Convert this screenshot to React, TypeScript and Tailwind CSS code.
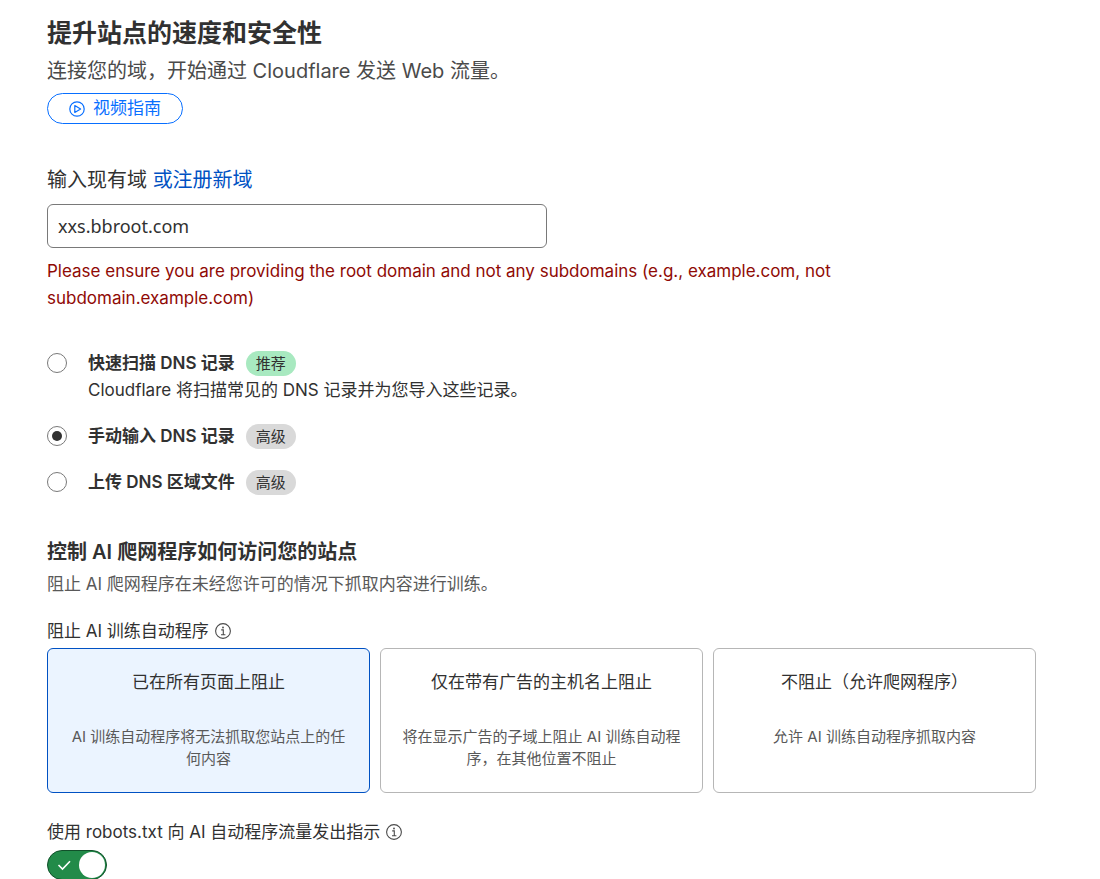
import React, { useState } from "react";

interface DnsOption {
  id: string;
  title: string;
  badge: string;
  badgeClass: string;
  description?: string;
}

interface CrawlerOption {
  id: string;
  title: string;
  description: string;
}

const dnsOptions: DnsOption[] = [
  {
    id: "scan",
    title: "快速扫描 DNS 记录",
    badge: "推荐",
    badgeClass: "bg-[#a8e9c0]",
    description: "Cloudflare 将扫描常见的 DNS 记录并为您导入这些记录。",
  },
  {
    id: "manual",
    title: "手动输入 DNS 记录",
    badge: "高级",
    badgeClass: "bg-[#d9d9d9]",
  },
  {
    id: "upload",
    title: "上传 DNS 区域文件",
    badge: "高级",
    badgeClass: "bg-[#d9d9d9]",
  },
];

const crawlerOptions: CrawlerOption[] = [
  {
    id: "all",
    title: "已在所有页面上阻止",
    description: "AI 训练自动程序将无法抓取您站点上的任何内容",
  },
  {
    id: "ads",
    title: "仅在带有广告的主机名上阻止",
    description: "将在显示广告的子域上阻止 AI 训练自动程序，在其他位置不阻止",
  },
  {
    id: "none",
    title: "不阻止（允许爬网程序）",
    description: "允许 AI 训练自动程序抓取内容",
  },
];

const InfoIcon: React.FC = () => (
  <svg
    viewBox="0 0 16 16"
    className="h-4 w-4 shrink-0 text-[#4a4a4a]"
    fill="none"
    stroke="currentColor"
    aria-hidden="true"
  >
    <circle cx="8" cy="8" r="7.4" strokeWidth="1.1" />
    <path d="M6.2 6.9h2.1v4.8M6 11.7h4.4" strokeWidth="1.1" />
    <circle cx="8" cy="4.5" r="0.9" fill="currentColor" stroke="none" />
  </svg>
);

const PlayIcon: React.FC = () => (
  <svg
    viewBox="0 0 16 16"
    className="h-4 w-4 shrink-0"
    fill="none"
    stroke="currentColor"
    strokeWidth="1.2"
    aria-hidden="true"
  >
    <circle cx="8" cy="8" r="7.2" />
    <path d="M5.8 4.6v6.8L11.6 8z" strokeLinejoin="round" />
  </svg>
);

const App: React.FC = () => {
  const [domain, setDomain] = useState("xxs.bbroot.com");
  const [dns, setDns] = useState("manual");
  const [crawler, setCrawler] = useState("all");
  const [robots, setRobots] = useState(true);

  return (
    <main className="bg-white pt-4 pr-16 pl-[47px] font-['Inter','Noto_Sans_CJK_SC',sans-serif] text-[17px] text-[#313131]">
      {/* Header */}
      <h1 className="text-[25px] leading-[34px] font-bold">提升站点的速度和安全性</h1>
      <p className="mt-1 text-xl leading-[34px] text-[#4a4a4a]">
        连接您的域，开始通过 Cloudflare 发送 Web 流量。
      </p>
      <button
        type="button"
        className="mt-[5px] flex h-[31px] items-center gap-2 rounded-full border border-[#086fff] px-[21px] text-[#086fff]"
      >
        <PlayIcon />
        视频指南
      </button>

      {/* Domain */}
      <div className="mt-10 text-xl leading-8">
        <label htmlFor="domain">输入现有域</label>{" "}
        <a href="#register" className="text-[#0051c3]">
          或注册新域
        </a>
      </div>
      <input
        id="domain"
        type="text"
        value={domain}
        onChange={(e) => setDomain(e.target.value)}
        className="mt-2 block h-11 w-full max-w-[500px] rounded-md border border-[#797979] px-[10px] font-['Noto_Sans',sans-serif] text-lg"
      />
      <p className="mt-[10px] leading-[27px] text-[#8f0a05]">
        Please ensure you are providing the root domain and not any subdomains (e.g., example.com,
        not subdomain.example.com)
      </p>

      {/* DNS records */}
      <div role="radiogroup" aria-label="DNS 记录" className="mt-[38px] flex flex-col gap-[19px]">
        {dnsOptions.map((option) => (
          <label key={option.id} className="flex items-start gap-[21px]">
            <input
              type="radio"
              name="dns"
              checked={dns === option.id}
              onChange={() => setDns(option.id)}
              className="mt-[3px] h-5 w-5 shrink-0 appearance-none rounded-full border border-[#797979] bg-white bg-clip-content p-1 checked:bg-[#313131]"
            />
            <span>
              <span className="flex items-center gap-[11px] leading-[27px] font-semibold">
                {option.title}
                <span
                  className={`rounded-full px-[10px] text-[15px] leading-[25px] font-normal ${option.badgeClass}`}
                >
                  {option.badge}
                </span>
              </span>
              {option.description && (
                <span className="block leading-[27px]">{option.description}</span>
              )}
            </span>
          </label>
        ))}
      </div>

      {/* AI crawlers */}
      <h2 className="mt-10 text-xl leading-8 font-semibold">控制 AI 爬网程序如何访问您的站点</h2>
      <p className="leading-8 text-[#595959]">
        阻止 AI 爬网程序在未经您许可的情况下抓取内容进行训练。
      </p>
      <div id="crawler-label" className="mt-4 flex items-center gap-[6px] leading-[30px]">
        阻止 AI 训练自动程序
        <InfoIcon />
      </div>
      <div
        role="radiogroup"
        aria-labelledby="crawler-label"
        className="mt-[2px] grid grid-cols-3 gap-[10px]"
      >
        {crawlerOptions.map((option) => (
          <label
            key={option.id}
            className="relative rounded-md border border-[#b6b6b6] px-5 pt-5 pb-[22px] text-center has-checked:border-[#0051c3] has-checked:bg-[#ebf4ff]"
          >
            <input
              type="radio"
              name="crawler"
              checked={crawler === option.id}
              onChange={() => setCrawler(option.id)}
              className="sr-only"
            />
            <span className="block leading-[27px]">{option.title}</span>
            <span className="mt-[30px] block text-[15px] leading-[22px] text-[#595959]">
              {option.description}
            </span>
          </label>
        ))}
      </div>

      {/* robots.txt */}
      <label htmlFor="robots" className="mt-6 flex items-center gap-[6px] leading-[30px]">
        使用 robots.txt 向 AI 自动程序流量发出指示
        <InfoIcon />
      </label>
      <button
        id="robots"
        type="button"
        role="switch"
        aria-checked={robots}
        onClick={() => setRobots(!robots)}
        className="mt-[3px] flex h-[30px] w-[60px] items-center justify-between rounded-full border border-[#11502a] bg-[#228b49] pr-px pl-2 aria-[checked=false]:flex-row-reverse aria-[checked=false]:bg-[#797979]"
      >
        <svg viewBox="0 0 16 16" className="h-4 w-4" fill="none" stroke="#fff" strokeWidth="1.6">
          <path d="M2.5 8l4 4 7.5-7.8" />
        </svg>
        <span className="h-[26px] w-[26px] rounded-full bg-white" />
      </button>
    </main>
  );
};

export default App;
